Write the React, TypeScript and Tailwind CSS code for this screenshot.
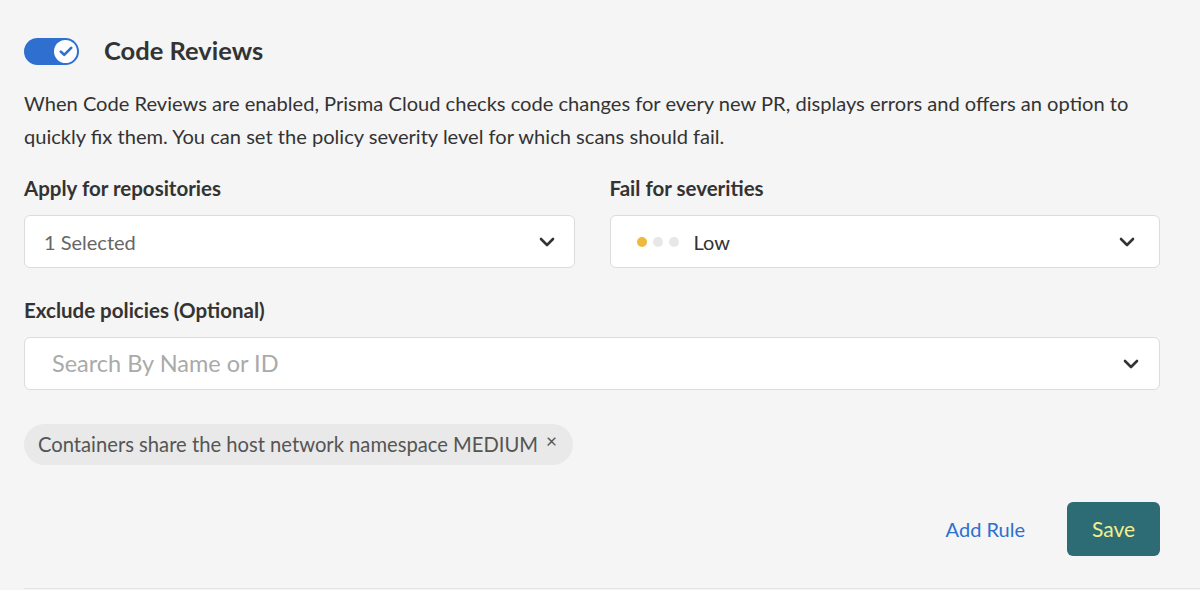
import React from "react";

const Chevron = () => (
  <svg width="16" height="10" viewBox="0 0 16 10" fill="none">
    <path d="M2 2l6 6 6-6" stroke="#333" strokeWidth="2.6" strokeLinecap="round" strokeLinejoin="round" />
  </svg>
);

export default function App() {
  return (
    <div className="w-[1200px] h-[590px] bg-[#f4f5f4] overflow-hidden" style={{ fontFamily: "Lato, 'Open Sans', sans-serif" }}>
      <div className="pl-[24px] pr-[40px] pt-[37px] text-[#333]">
        <div className="flex items-center h-[28px]">
          <div className="w-[55px] h-[27px] rounded-full bg-[#2f6fcf] flex items-center justify-end pr-[2px]">
            <div className="w-[23px] h-[23px] rounded-full bg-white flex items-center justify-center">
              <svg width="14" height="11" viewBox="0 0 14 11" fill="none">
                <path d="M1.8 5.6l3.4 3.2L12.2 1.8" stroke="#2f6fcf" strokeWidth="2.6" strokeLinecap="round" strokeLinejoin="round" />
              </svg>
            </div>
          </div>
          <div className="ml-[25px] text-[25.5px] font-bold text-[#333] leading-none">Code Reviews</div>
        </div>
        <p className="mt-[22px] text-[20.1px] leading-[33px] text-[#333]">
          When Code Reviews are enabled, Prisma Cloud checks code changes for every new PR, displays errors and offers an option to quickly fix them. You can set the policy severity level for which scans should fail.
        </p>
        <div className="mt-[22px] grid grid-cols-2 gap-[35px]">
          <div>
            <div className="text-[20.5px] font-bold leading-[26px]">Apply for repositories</div>
            <div className="mt-[14px] h-[53px] bg-white border border-[#dcdcdc] rounded-[6px] flex items-center justify-between pl-[19px] pr-[19px]">
              <span className="text-[20px] text-[#666]">1 Selected</span>
              <Chevron />
            </div>
          </div>
          <div>
            <div className="text-[20.5px] font-bold leading-[26px]">Fail for severities</div>
            <div className="mt-[14px] h-[53px] bg-white border border-[#dcdcdc] rounded-[6px] flex items-center justify-between pl-[26px] pr-[24px]">
              <div className="flex items-center">
                <span className="w-[10px] h-[10px] rounded-full bg-[#f0b93a]" />
                <span className="ml-[6px] w-[10px] h-[10px] rounded-full bg-[#e6e7e7]" />
                <span className="ml-[6px] w-[10px] h-[10px] rounded-full bg-[#e6e7e7]" />
                <span className="ml-[15px] text-[20px] text-[#333]">Low</span>
              </div>
              <Chevron />
            </div>
          </div>
        </div>
        <div className="mt-[29px] text-[20.5px] font-bold leading-[26px]">Exclude policies (Optional)</div>
        <div className="mt-[14px] h-[53px] bg-white border border-[#dcdcdc] rounded-[6px] flex items-center justify-between pl-[27px] pr-[20px]">
          <span className="text-[23.5px] text-[#aaaaaa]">Search By Name or ID</span>
          <Chevron />
        </div>
        <div className="mt-[34px] flex">
          <div className="h-[41px] rounded-full bg-[#e8e9e8] flex items-center pl-[14px] pr-[16px]">
            <span className="text-[20.2px] text-[#555]">Containers share the host network namespace MEDIUM</span>
            <span className="ml-[8px] text-[19px] text-[#555] -mt-[6px]">×</span>
          </div>
        </div>
        <div className="mt-[37px] flex justify-end items-center">
          <span className="text-[20px] text-[#2e6fcf]">Add Rule</span>
          <button className="ml-[42px] w-[93px] h-[54px] rounded-[6px] bg-[#2d6b75] text-[#f3ef8a] text-[21px]">Save</button>
        </div>
      </div>
      <div className="ml-[24px] mt-[32px] h-[1px] bg-[#e2e3e2]" />
    </div>
  );
}
